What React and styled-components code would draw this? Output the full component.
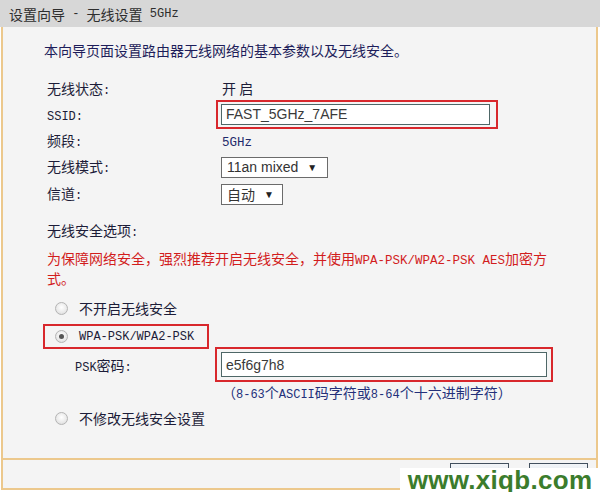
import React from 'react';
import styled, { createGlobalStyle } from 'styled-components';

const GlobalStyle = createGlobalStyle`
  *, *::before, *::after { box-sizing: border-box; }
  html, body { margin: 0; padding: 0; background: #fff; }
  body {
    width: 600px;
    height: 492px;
    overflow: hidden;
    font-family: "Noto Sans CJK SC", "Liberation Sans", sans-serif;
  }
`;

const CJK = '"Noto Sans CJK SC", sans-serif';
const MONO = '"Liberation Mono", "Noto Sans CJK SC", monospace';
const ARIAL = '"Liberation Sans", Arial, sans-serif';

const Window = styled.div`
  position: relative;
  width: 600px;
  height: 492px;
  display: flex;
  flex-direction: column;
  background: #fff;
`;

const TitleBar = styled.div`
  flex: none;
  height: 27px;
  display: flex;
  align-items: center;
  padding-left: 9px;
  background: #d7d7d7;
  color: #2e2e2e;
  font-family: ${CJK};
  font-size: 14px;
  white-space: pre;
`;

// half-width latin text, the way the router's SimSun page sets it
const Latin = styled.span`
  font-family: ${MONO};
  font-size: ${props => props.$size || 12}px;
  line-height: 1;
  white-space: pre;
`;

const Panel = styled.div`
  flex: 1;
  display: flex;
  flex-direction: column;
  margin: 0 2px 2px 1px;
  border: 2px solid #ecc88c;
  border-top: none;
  background: #f4f4f4;
`;

const Content = styled.div`
  flex: 1;
  padding: 13px 0 0 40px;
`;

const Intro = styled.p`
  margin: 0 0 0 1px;
  line-height: 20px;
  font-size: 14px;
  color: #1d1d5a;
`;

const FormGrid = styled.div`
  display: grid;
  grid-template-columns: 174px 1fr;
  grid-template-rows: 24px 28px 24px 27px 28px;
  align-items: center;
  margin: 16px 0 0 4px;
`;

const Label = styled.span`
  font-size: 14px;
  color: #1c1c38;
`;

const Value = styled.span`
  padding-left: 1px;
  font-size: 14px;
  color: ${props => (props.$blue ? '#1f2a6b' : '#1c1c38')};
`;

const Mark = styled.div`
  display: inline-flex;
  align-items: center;
  margin-left: ${props => props.$shift || 0}px;
  padding: ${props => props.$pad || '2px 6px 2px 3px'};
  border: 2px solid #d8272c;
`;

const TextBox = styled.div`
  width: ${props => props.$w}px;
  height: ${props => props.$h}px;
  display: flex;
  align-items: center;
  padding-left: 4px;
  border: 1px solid #4e6767;
  background: #fff;
  font-family: ${ARIAL};
  font-size: 14px;
  color: #3a3a3a;
`;

const SelectBox = styled.div`
  display: inline-flex;
  align-items: center;
  gap: 9px;
  width: ${props => props.$w}px;
  height: 21px;
  padding-left: 5px;
  border: 1px solid #6b6b6b;
  background: #fff;
  font-family: ${props => (props.$cjk ? CJK : ARIAL)};
  font-size: 14px;
  color: #333;

  &::after {
    content: '▼';
    font-family: ${ARIAL};
    font-size: 10px;
    color: #222;
  }
`;

const SectionTitle = styled.div`
  margin: 13px 0 0 4px;
  line-height: 20px;
  font-size: 14px;
  color: #1c1c38;
`;

const Warning = styled.p`
  margin: 8px 0 0 4px;
  line-height: 20px;
  font-size: 14px;
  color: #d21d1d;
`;

const RadioRow = styled.div`
  display: flex;
  align-items: center;
  gap: 11px;
  height: 24px;
  margin-top: ${props => props.$top || 0}px;
  padding-left: 12px;
  font-size: 14px;
  color: #1c1c38;
`;

const Radio = styled.span`
  flex: none;
  width: 13px;
  height: 13px;
  border-radius: 50%;
  border: 1px solid #b4b4b4;
  background: radial-gradient(circle at 50% 40%, #ffffff 0%, #e9e9e9 60%, #d2d2d2 100%);
  display: flex;
  align-items: center;
  justify-content: center;

  &::after {
    content: '';
    width: 5px;
    height: 5px;
    border-radius: 50%;
    background: ${props => (props.$checked ? '#555' : 'transparent')};
  }
`;

const WpaMark = styled.div`
  display: flex;
  align-items: center;
  gap: 11px;
  width: 166px;
  height: 25px;
  margin-top: 4px;
  padding-left: 10px;
  border: 2px solid #d8272c;
  color: #1c1c38;
`;

const PskRow = styled.div`
  display: flex;
  align-items: center;
  margin: -2px 0 0 32px;
`;

const PskLabel = styled.span`
  width: 140px;
  font-size: 14px;
  color: #1c1c38;
`;

const Hint = styled.div`
  margin: 1px 0 0 179px;
  line-height: 18px;
  font-size: 14px;
  color: #23307a;
`;

const Footer = styled.div`
  flex: none;
  height: 30px;
  display: flex;
  justify-content: flex-end;
  gap: 20px;
  padding: 3px 8px 0 0;
  border-top: 2px solid #ecc88c;
`;

const NavButton = styled.button`
  width: 59px;
  height: 22px;
  padding: 0;
  border: 1px solid #42505e;
  background: linear-gradient(#f2f5f8, #d9e2ea);
  font-family: ${CJK};
  font-size: 13px;
  letter-spacing: 6px;
  color: #111;
`;

const Watermark = styled.div`
  position: absolute;
  left: 400px;
  top: 468px;
  width: 200px;
  height: 24px;
  display: flex;
  align-items: center;
  justify-content: center;
  background: #fff;
  font-family: ${ARIAL};
  font-weight: 700;
  font-size: 26px;
  letter-spacing: 0.3px;
  color: #3b7c2c;
`;

const App = () => (
  <Window>
    <GlobalStyle />
    <TitleBar>
      设置向导<Latin> - </Latin>无线设置<Latin> 5GHz</Latin>
    </TitleBar>
    <Panel>
      <Content>
        <Intro>本向导页面设置路由器无线网络的基本参数以及无线安全。</Intro>

        <FormGrid>
          <Label>无线状态<Latin>:</Latin></Label>
          <Value>开 启</Value>

          <Label><Latin>SSID:</Latin></Label>
          <div>
            <Mark $shift={-5}>
              <TextBox $w={269} $h={21}>FAST_5GHz_7AFE</TextBox>
            </Mark>
          </div>

          <Label>频段<Latin>:</Latin></Label>
          <Value $blue><Latin $size={12.5}>5GHz</Latin></Value>

          <Label>无线模式<Latin>:</Latin></Label>
          <div>
            <SelectBox $w={107}>11an mixed</SelectBox>
          </div>

          <Label>信道<Latin>:</Latin></Label>
          <div>
            <SelectBox $w={62} $cjk>自动</SelectBox>
          </div>
        </FormGrid>

        <SectionTitle>无线安全选项<Latin>:</Latin></SectionTitle>
        <Warning>
          为保障网络安全，强烈推荐开启无线安全，并使用<Latin $size={12.5}>WPA-PSK/WPA2-PSK AES</Latin>加密方
          <br />
          式。
        </Warning>

        <RadioRow $top={8}>
          <Radio />
          不开启无线安全
        </RadioRow>

        <WpaMark>
          <Radio $checked />
          <Latin>WPA-PSK/WPA2-PSK</Latin>
        </WpaMark>

        <PskRow>
          <PskLabel><Latin>PSK</Latin>密码<Latin>:</Latin></PskLabel>
          <Mark $pad="3px 4px 3px 4px">
            <TextBox $w={326} $h={25}>e5f6g7h8</TextBox>
          </Mark>
        </PskRow>
        <Hint>（<Latin>8-63</Latin>个<Latin>ASCII</Latin>码字符或<Latin>8-64</Latin>个十六进制字符）</Hint>

        <RadioRow $top={5}>
          <Radio />
          不修改无线安全设置
        </RadioRow>
      </Content>

      <Footer>
        <NavButton>上一步</NavButton>
        <NavButton>下一步</NavButton>
      </Footer>
    </Panel>
    <Watermark>www.xiqb.com</Watermark>
  </Window>
);

export default App;
